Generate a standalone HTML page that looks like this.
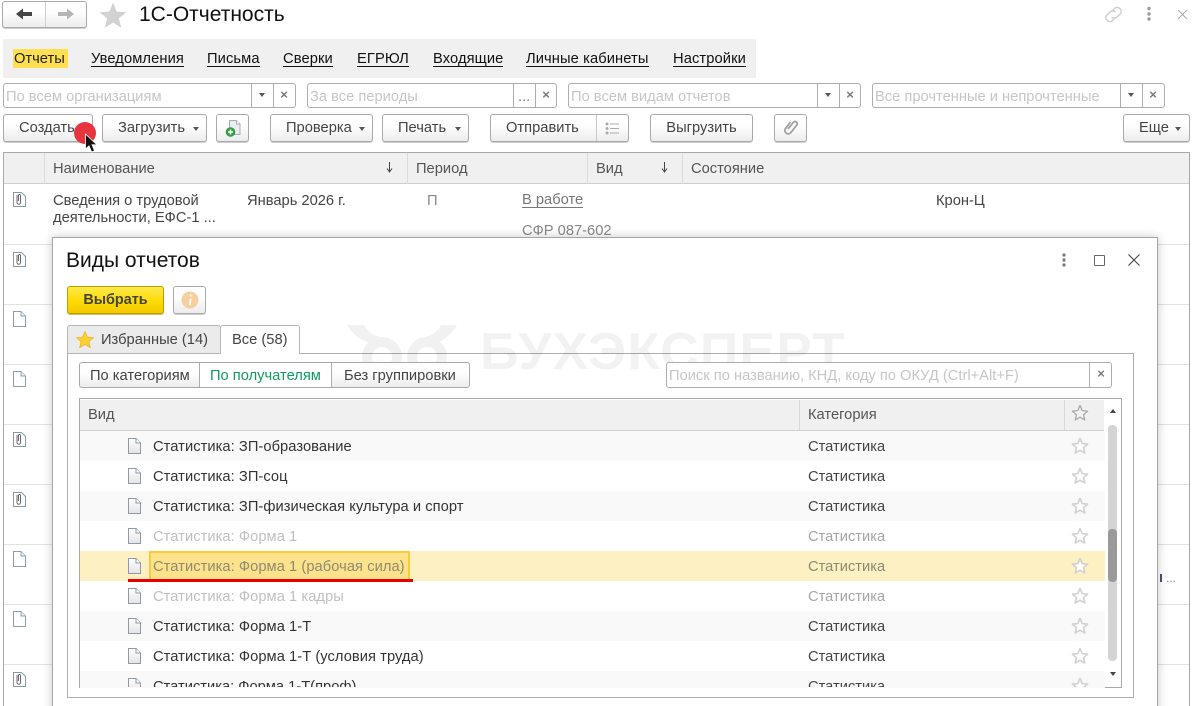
<!DOCTYPE html>
<html lang="ru"><head><meta charset="utf-8"><title>1С-Отчетность</title>
<style>
html,body{margin:0;padding:0;background:#fff}
#p{position:relative;width:1194px;height:706px;overflow:hidden;background:#fff;font:14.7px/18px "Liberation Sans",Arial,sans-serif;color:#333}
#p div,#p span.a,#p svg{position:absolute;box-sizing:border-box}
.t{white-space:nowrap;line-height:18px}
.btn{height:28px;border:1px solid #a9a9a9;border-radius:3px;background:linear-gradient(#fff 0%,#fdfdfd 45%,#ececec 100%);box-shadow:0 1px 0 #cfcfcf;color:#444;text-align:center;line-height:27px;white-space:nowrap}
.fld{height:25px;border:1px solid #adadad;border-radius:3px;background:#fff}
.ph{color:#c6c6c6;white-space:nowrap;top:4px;left:2px}
.v{top:0;bottom:0;width:1px;background:#adadad}
.tri{width:0;height:0;border-left:3.5px solid transparent;border-right:3.5px solid transparent;border-top:4px solid #555}
.x{color:#777;font-size:13px;font-weight:bold;line-height:14px;width:12px;text-align:center}
.m{top:51px;color:#111;border-bottom:1px solid #111;line-height:17px;white-space:nowrap;height:16px;letter-spacing:.1px}
.h{top:160px;color:#555;white-space:nowrap}
.l{left:4px;width:48px;height:1px;background:#e3e3e3}
.lr{left:1158px;width:31px;height:1px;background:#e3e3e3}
.row{left:80px;width:1025px;height:30px}
.rt{left:153px;white-space:nowrap;color:#333;letter-spacing:.05px}
.rc{left:808px;white-space:nowrap;color:#444}
.g{color:#c0c0c0}
</style></head><body>
<div id="p">
<svg width="0" height="0" style="left:0;top:0">
<defs>
<g id="doc"><path d="M1.5 .5H9L13.5 5V15.5H1.5Z" fill="#fff" stroke="#8b9fb0" stroke-width="1"/><path d="M9 .5V5H13.5" fill="#eef1f4" stroke="#8b9fb0"/></g>
<g id="clip"><path d="M.5 1.5H8.5L12.5 5.5V15.5H.5Z" fill="#fff" stroke="#8499aa"/><path d="M4 4V11.5A1.7 1.7 0 0 0 7.5 11.5V4.5A1 1 0 0 0 5.5 4.5V10" fill="none" stroke="#666"/></g>
<g id="d2"><path d="M1.5 .5H9L13.5 5V15.5H1.5Z" fill="url(#dg)" stroke="#8f9aa6"/><path d="M9 .5V5H13.5" fill="#fff" stroke="#8f9aa6"/></g>
<linearGradient id="dg" x1="0" y1="0" x2="0" y2="1"><stop offset="0" stop-color="#fff"/><stop offset="1" stop-color="#e4e4e4"/></linearGradient>
<path id="st" d="M9 1.5L11.2 6.6 16.6 7.1 12.5 10.7 13.8 16 9 13.2 4.2 16 5.5 10.7 1.4 7.1 6.8 6.6Z" fill="#fff" stroke="#d2d2d2" stroke-width="1.6" stroke-linejoin="round"/>
</defs></svg>

<!-- top bar -->
<div class="btn" style="left:2px;top:1px;width:85px;height:27px"></div>
<div style="left:45px;top:2px;width:1px;height:25px;background:#cfcfcf"></div>
<svg style="left:15px;top:7px" width="18" height="14"><path d="M1 7L8 1.5V5H17V9H8V12.5Z" fill="#444"/></svg>
<svg style="left:57px;top:7px" width="18" height="14"><path d="M17 7L10 1.5V5H1V9H10V12.5Z" fill="#b5b5b5"/></svg>
<svg style="left:99px;top:2px" width="28" height="26"><path d="M14 .5L17.6 9.6 27.4 10.2 19.8 16.4 22.3 25.8 14 20.6 5.7 25.8 8.2 16.4 .6 10.2 10.4 9.6Z" fill="#d2d2d2"/></svg>
<div class="t" style="left:139px;top:3px;font-size:21px;line-height:24px;color:#111">1С-Отчетность</div>
<svg style="left:1104px;top:5px" width="19" height="19" fill="none" stroke="#cfcfcf" stroke-width="1.5"><path d="M8 6L11 3A4 4 0 0 1 16.5 8.5L13 12A4 4 0 0 1 7.5 12"/><path d="M11 13L8 16A4 4 0 0 1 2.5 10.5L6 7A4 4 0 0 1 11.5 7"/></svg>
<svg style="left:1145px;top:6px" width="8" height="16" fill="#9a9a9a"><circle cx="4" cy="2.5" r="1.7"/><circle cx="4" cy="8" r="1.7"/><circle cx="4" cy="13" r="1.7"/></svg>
<svg style="left:1177px;top:9px" width="11" height="11" stroke="#aaa" fill="none"><path d="M1 1L10 10M10 1L1 10"/></svg>

<!-- menu -->
<div style="left:3px;top:39px;width:753px;height:39px;background:#f0f0f0"></div>
<div class="t" style="left:13px;top:49px;width:55px;height:19px;background:#ffdf4f"></div>
<div class="t" style="left:14px;top:50px;color:#222">Отчеты</div>
<div class="m" style="left:91px">Уведомления</div>
<div class="m" style="left:207px">Письма</div>
<div class="m" style="left:283px">Сверки</div>
<div class="m" style="left:357px">ЕГРЮЛ</div>
<div class="m" style="left:433px">Входящие</div>
<div class="m" style="left:526px">Личные кабинеты</div>
<div class="m" style="left:673px">Настройки</div>

<!-- filters -->
<div class="fld" style="left:3px;top:83px;width:293px"><div class="ph">По всем организациям</div><div class="v" style="left:247px"></div><div class="v" style="left:269px"></div><div class="tri" style="left:255px;top:9px"></div><div class="x" style="left:274px;top:4px">×</div></div>
<div class="fld" style="left:307px;top:83px;width:250px"><div class="ph">За все периоды</div><div class="v" style="left:205px"></div><div class="v" style="left:227px"></div><div class="t" style="left:210px;top:4px;color:#777">...</div><div class="x" style="left:232px;top:4px">×</div></div>
<div class="fld" style="left:568px;top:83px;width:293px"><div class="ph">По всем видам отчетов</div><div class="v" style="left:248px"></div><div class="v" style="left:270px"></div><div class="tri" style="left:256px;top:9px"></div><div class="x" style="left:275px;top:4px">×</div></div>
<div class="fld" style="left:872px;top:83px;width:293px"><div class="ph">Все прочтенные и непрочтенные</div><div class="v" style="left:247px"></div><div class="v" style="left:269px"></div><div class="tri" style="left:255px;top:9px"></div><div class="x" style="left:274px;top:4px">×</div></div>

<!-- toolbar -->
<div class="btn" style="left:3px;top:114px;width:90px;text-align:left;padding-left:15px">Создать</div>
<div class="btn" style="left:102px;top:114px;width:105px;text-align:left;padding-left:15px">Загрузить<div class="tri" style="left:90px;top:12px"></div></div>
<div class="btn" style="left:216px;top:114px;width:33px">
<svg style="left:8px;top:4px" width="18" height="19"><path d="M4.5 1.5H11.5L15 5V15.5H4.5Z" fill="#e9edf1" stroke="#a4afb9"/><path d="M11.5 1.5V5H15" fill="#fff" stroke="#a4afb9"/><circle cx="5.5" cy="13" r="4.8" fill="#2f9e44"/><path d="M5.5 10.5V15.5M3 13H8" stroke="#fff" stroke-width="1.6"/></svg></div>
<div class="btn" style="left:270px;top:114px;width:103px;text-align:left;padding-left:15px">Проверка<div class="tri" style="left:88px;top:12px"></div></div>
<div class="btn" style="left:382px;top:114px;width:87px;text-align:left;padding-left:15px">Печать<div class="tri" style="left:72px;top:12px"></div></div>
<div class="btn" style="left:490px;top:114px;width:139px;text-align:left;padding-left:15px">Отправить<div class="v" style="left:105px;background:#c8c8c8"></div>
<svg style="left:114px;top:7px" width="15" height="13"><circle cx="2" cy="2" r="1.5" fill="#aaa"/><circle cx="2" cy="6.5" r="1.5" fill="#aaa"/><circle cx="2" cy="11" r="1.5" fill="#aaa"/><path d="M5 2H14M5 6.5H14M5 11H14" stroke="#aaa"/></svg></div>
<div class="btn" style="left:650px;top:114px;width:103px">Выгрузить</div>
<div class="btn" style="left:774px;top:114px;width:33px">
<svg style="left:9px;top:4px" width="15" height="18" fill="none" stroke="#a0a0a0" stroke-width="1.8"><path d="M4 10L9.5 3.2A2.2 2.2 0 0 1 13 5.8L6.5 14A3.4 3.4 0 0 1 1.3 9.8L6.5 3"/></svg></div>
<div class="btn" style="left:1123px;top:114px;width:67px;text-align:left;padding-left:15px">Еще<div class="tri" style="left:51px;top:12px"></div></div>

<!-- main table -->
<div style="left:3px;top:152px;width:1187px;height:554px;border:solid #a9a9a9;border-width:1px 1px 0 1px"></div>
<div style="left:4px;top:153px;width:1185px;height:31px;background:#f0f0f0;border-bottom:1px solid #cfcfcf"></div>
<div style="left:44px;top:153px;width:1px;height:31px;background:#dcdcdc"></div>
<div style="left:407px;top:153px;width:1px;height:31px;background:#dcdcdc"></div>
<div style="left:587px;top:153px;width:1px;height:31px;background:#dcdcdc"></div>
<div style="left:682px;top:153px;width:1px;height:31px;background:#dcdcdc"></div>
<div class="h" style="left:53px">Наименование</div>
<div class="h" style="left:416px">Период</div>
<div class="h" style="left:596px">Вид</div>
<div class="h" style="left:691px">Состояние</div>
<svg style="left:386px;top:162px" width="7" height="11"><path d="M3.5 0V9M1 6.5L3.5 10 6 6.5" stroke="#444" fill="none"/></svg>
<svg style="left:661px;top:162px" width="7" height="11"><path d="M3.5 0V9M1 6.5L3.5 10 6 6.5" stroke="#444" fill="none"/></svg>

<div class="t" style="left:53px;top:192px;color:#444">Сведения о трудовой</div>
<div class="t" style="left:53px;top:209px;color:#444">деятельности, ЕФС-1 ...</div>
<div class="t" style="left:247px;top:192px;color:#444">Январь 2026 г.</div>
<div class="t" style="left:427px;top:192px;color:#888">П</div>
<div class="t" style="left:522px;top:192px;color:#777;border-bottom:1px solid #777;height:16px;line-height:17px">В работе</div>
<div class="t" style="left:522px;top:222px;color:#888">СФР 087-602</div>
<div class="t" style="left:936px;top:192px;color:#444">Крон-Ц</div>

<div class="l" style="top:244px"></div><div class="l" style="top:304px"></div><div class="l" style="top:364px"></div><div class="l" style="top:424px"></div><div class="l" style="top:484px"></div><div class="l" style="top:544px"></div><div class="l" style="top:604px"></div><div class="l" style="top:664px"></div>
<div class="lr" style="top:244px"></div><div class="lr" style="top:304px"></div><div class="lr" style="top:364px"></div><div class="lr" style="top:424px"></div><div class="lr" style="top:484px"></div><div class="lr" style="top:544px"></div><div class="lr" style="top:604px"></div><div class="lr" style="top:664px"></div>

<svg style="left:13px;top:191px" width="14" height="17"><use href="#clip"/></svg>
<svg style="left:13px;top:251px" width="14" height="17"><use href="#clip"/></svg>
<svg style="left:12px;top:311px" width="15" height="17"><use href="#doc"/></svg>
<svg style="left:12px;top:371px" width="15" height="17"><use href="#doc"/></svg>
<svg style="left:13px;top:431px" width="14" height="17"><use href="#clip"/></svg>
<svg style="left:13px;top:491px" width="14" height="17"><use href="#clip"/></svg>
<svg style="left:12px;top:551px" width="15" height="17"><use href="#doc"/></svg>
<svg style="left:12px;top:611px" width="15" height="17"><use href="#doc"/></svg>
<svg style="left:13px;top:671px" width="14" height="17"><use href="#clip"/></svg>
<div style="left:1160px;top:574px;width:2px;height:8px;background:#5b4a7a"></div>
<div class="t" style="left:1166px;top:569px;color:#6d93bd;font-size:12px">...</div>

<!-- dialog -->
<div style="left:52px;top:237px;width:1106px;height:480px;background:#fff;border:1px solid #a6a6a6;box-shadow:0 0 9px rgba(0,0,0,.22)"></div>
<div class="t" style="left:66px;top:249px;font-size:21px;line-height:24px;color:#111">Виды отчетов</div>
<svg style="left:1060px;top:253px" width="8" height="14" fill="#777"><circle cx="4" cy="2" r="1.6"/><circle cx="4" cy="7" r="1.6"/><circle cx="4" cy="12" r="1.6"/></svg>
<div style="left:1094px;top:255px;width:11px;height:11px;border:1.5px solid #666;border-radius:1px"></div>
<svg style="left:1128px;top:254px" width="12" height="12" stroke="#444" fill="none" stroke-width="1.1"><path d="M.5 .5L11.5 11.5M11.5 .5L.5 11.5"/></svg>

<div style="left:67px;top:286px;width:97px;height:28px;border:1px solid #b89f00;border-radius:3px;background:linear-gradient(#ffe94a 0%,#fdd900 60%,#f2c900 100%);text-align:center;font-weight:bold;font-size:14.4px;color:#444;line-height:27px;box-shadow:0 1px 0 #d0c060">Выбрать</div>
<div class="btn" style="left:173px;top:286px;width:33px">
<svg style="left:7px;top:4px" width="18" height="18"><circle cx="9" cy="9" r="8.5" fill="#f5cf9f"/><path d="M9 3.5h1.6v2H9zM8.8 7.5h1.8L9.6 14H8z" fill="#fff"/></svg></div>

<!-- tabs + panel -->
<div style="left:67px;top:353px;width:1067px;height:345px;border:1px solid #aeaeae;background:#fff"></div>
<div style="left:67px;top:325px;width:154px;height:29px;border:1px solid #b5b5b5;border-radius:3px 3px 0 0;background:#ebebeb"></div>
<svg style="left:76px;top:331px" width="18" height="17"><path d="M9 .5L11.5 6 17.6 6.6 13 10.7 14.4 16.7 9 13.5 3.6 16.7 5 10.7 .4 6.6 6.5 6Z" fill="#fbcf2e" stroke="#e5ac20" stroke-width=".6"/></svg>
<div class="t" style="left:101px;top:331px;color:#444">Избранные (14)</div>
<div style="left:220px;top:325px;width:80px;height:29px;border:1px solid #b5b5b5;border-bottom:0;border-radius:3px 3px 0 0;background:#fff"></div>
<div class="t" style="left:232px;top:331px;color:#444">Все (58)</div>

<!-- watermark, behind the buttons and search field -->
<svg style="left:345px;top:322px;opacity:.05" width="120" height="56"><g fill="none" stroke="#000" stroke-width="10"><circle cx="37" cy="35" r="15"/><circle cx="82" cy="35" r="15"/></g><path d="M2 3H19C23 11 30 15 42 16L40 24C24 23 10 17 2 3ZM112 3H96C92 11 85 15 74 16L76 24C92 23 104 17 112 3Z" fill="#000"/></svg>
<div class="t" style="left:480px;top:322px;font-size:52px;line-height:60px;font-weight:bold;color:rgba(0,0,0,.05);letter-spacing:1px;transform-origin:left top;transform:scaleX(1.03)">БУХЭКСПЕРТ</div>

<!-- segmented -->
<div class="btn" style="left:79px;top:362px;width:391px;height:26px;line-height:23px;box-shadow:none"></div>
<div style="left:199px;top:363px;width:133px;height:24px;background:#fff;border:solid #adadad;border-width:0 1px"></div>
<div class="t" style="left:90px;top:367px;color:#444">По категориям</div>
<div class="t" style="left:210px;top:367px;color:#0e9a63">По получателям</div>
<div class="t" style="left:344px;top:367px;color:#444">Без группировки</div>

<div class="fld" style="left:666px;top:362px;width:446px;height:26px"><div class="ph" style="top:4px">Поиск по названию, КНД, коду по ОКУД (Ctrl+Alt+F)</div><div class="v" style="left:422px"></div><div class="x" style="left:428px;top:4px">×</div></div>

<!-- inner table -->
<div style="left:79px;top:398px;width:1043px;height:290px;border:1px solid #a9a9a9;background:#fff;overflow:hidden"></div>
<div style="left:80px;top:400px;width:1024px;height:31px;background:#f0f0f0;border-bottom:1px solid #d0d0d0"></div>
<div style="left:799px;top:400px;width:1px;height:30px;background:#d8d8d8"></div>
<div style="left:1064px;top:400px;width:1px;height:30px;background:#d8d8d8"></div>
<div class="t" style="left:88px;top:406px;color:#555">Вид</div>
<div class="t" style="left:808px;top:406px;color:#555">Категория</div>
<svg style="left:1071px;top:404px" width="18" height="18"><path d="M9 1.5L11.2 6.6 16.6 7.1 12.5 10.7 13.8 16 9 13.2 4.2 16 5.5 10.7 1.4 7.1 6.8 6.6Z" fill="#f4f4f4" stroke="#a8a8a8" stroke-width="1.3" stroke-linejoin="round"/></svg>

<div class="row" style="top:431px;background:#f9f9f9"></div>
<div class="row" style="top:491px;background:#f9f9f9"></div>
<div class="row" style="top:551px;background:#fdf0c3"></div>
<div class="row" style="top:611px;background:#f9f9f9"></div>
<div class="row" style="top:671px;height:17px;background:#f9f9f9"></div>

<svg style="left:127px;top:438px" width="15" height="16"><use href="#d2"/></svg>
<svg style="left:127px;top:468px" width="15" height="16"><use href="#d2"/></svg>
<svg style="left:127px;top:498px" width="15" height="16"><use href="#d2"/></svg>
<svg style="left:127px;top:528px" width="15" height="16"><use href="#d2"/></svg>
<svg style="left:127px;top:558px" width="15" height="16"><use href="#d2"/></svg>
<svg style="left:127px;top:588px" width="15" height="16"><use href="#d2"/></svg>
<svg style="left:127px;top:618px" width="15" height="16"><use href="#d2"/></svg>
<svg style="left:127px;top:648px" width="15" height="16"><use href="#d2"/></svg>
<svg style="left:127px;top:678px" width="15" height="9" viewBox="0 0 15 9"><use href="#d2"/></svg>

<div style="left:149px;top:551px;width:261px;height:30px;background:#fde28c;border:2px solid #fcc93a"></div>
<div class="rt" style="top:438px">Статистика: ЗП-образование</div>
<div class="rt" style="top:468px">Статистика: ЗП-соц</div>
<div class="rt" style="top:498px">Статистика: ЗП-физическая культура и спорт</div>
<div class="rt g" style="top:528px">Статистика: Форма 1</div>
<div class="rt" style="top:558px;color:#8f8a70">Статистика: Форма 1 (рабочая сила)</div>
<div class="rt g" style="top:588px">Статистика: Форма 1 кадры</div>
<div class="rt" style="top:618px">Статистика: Форма 1-Т</div>
<div class="rt" style="top:648px">Статистика: Форма 1-Т (условия труда)</div>
<div style="left:153px;top:678px;width:300px;height:9px;overflow:hidden"><div class="t" style="left:0;top:0;color:#333">Статистика: Форма 1-Т(проф)</div></div>
<div style="left:128px;top:579px;width:285px;height:3px;background:#e80000"></div>

<div class="rc" style="top:438px">Статистика</div>
<div class="rc" style="top:468px">Статистика</div>
<div class="rc" style="top:498px">Статистика</div>
<div class="rc g" style="top:528px;color:#a5a5a5">Статистика</div>
<div class="rc" style="top:558px;color:#8f8a70">Статистика</div>
<div class="rc g" style="top:588px;color:#a5a5a5">Статистика</div>
<div class="rc" style="top:618px">Статистика</div>
<div class="rc" style="top:648px">Статистика</div>
<div style="left:808px;top:678px;width:100px;height:9px;overflow:hidden"><div class="t" style="left:0;top:0;color:#444">Статистика</div></div>

<svg style="left:1071px;top:437px" width="18" height="18"><use href="#st"/></svg>
<svg style="left:1071px;top:467px" width="18" height="18"><use href="#st"/></svg>
<svg style="left:1071px;top:497px" width="18" height="18"><use href="#st"/></svg>
<svg style="left:1071px;top:527px" width="18" height="18"><use href="#st"/></svg>
<svg style="left:1071px;top:557px" width="18" height="18"><use href="#st"/></svg>
<svg style="left:1071px;top:587px" width="18" height="18"><use href="#st"/></svg>
<svg style="left:1071px;top:617px" width="18" height="18"><use href="#st"/></svg>
<svg style="left:1071px;top:647px" width="18" height="18"><use href="#st"/></svg>
<svg style="left:1071px;top:677px" width="18" height="10" viewBox="0 0 18 10"><use href="#st"/></svg>

<!-- scrollbar -->
<div style="left:1108px;top:425px;width:9px;height:236px;background:#d4d4d4;border-radius:4px"></div>
<div style="left:1108px;top:529px;width:9px;height:53px;background:#9a9a9a;border-radius:4px"></div>
<div class="tri" style="left:1110px;top:409px;border-top:0;border-bottom:4px solid #444"></div>
<div class="tri" style="left:1110px;top:672px;border-top:4px solid #444"></div>

<!-- red dot + cursor -->
<div style="left:74px;top:122px;width:22px;height:22px;border-radius:50%;background:#e8343c"></div>
<svg style="left:84px;top:133px" width="15" height="21"><path d="M1.5 1V16L5 12.8 7.6 19 10.6 17.8 8 11.8H13Z" fill="#111" stroke="#fff" stroke-width=".8"/></svg>
</div>
</body></html>
